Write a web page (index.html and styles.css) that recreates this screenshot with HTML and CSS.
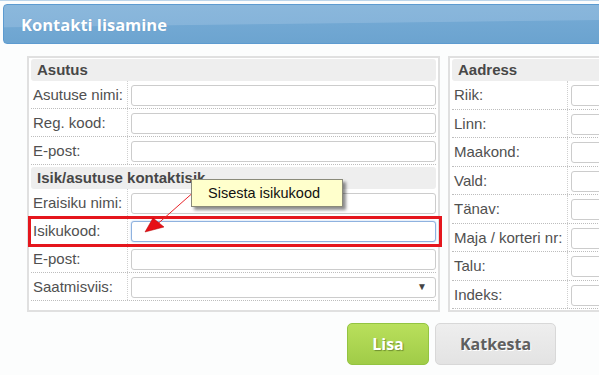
FILE: index.html
```html
<!DOCTYPE html>
<html lang="et">
<head>
  <meta charset="UTF-8" />
  <title>Kontakti lisamine</title>
  <link rel="stylesheet" href="styles.css">
</head>
<body>
  <div class="topline"></div>

  <!-- Pealkiri -->
  <div class="titlebar">
    <h1>Kontakti lisamine</h1>
  </div>

  <div class="forms">
    <div class="panel panel-left">
      <div class="section">Asutus</div>
      <div class="row"><label>Asutuse nimi:</label><div class="cell"><input type="text" /></div></div>
      <div class="row"><label>Reg. kood:</label><div class="cell"><input type="text" /></div></div>
      <div class="row"><label>E-post:</label><div class="cell"><input type="text" /></div></div>

      <div class="section section-gap">Isik/asutuse kontaktisik</div>
      <div class="row"><label>Eraisiku nimi:</label><div class="cell"><input type="text" /></div></div>
      <div class="row"><label>Isikukood:</label><div class="cell"><input class="focused" type="text" /></div></div>
      <div class="row"><label>E-post:</label><div class="cell"><input type="text" /></div></div>
      <div class="row">
        <label>Saatmisviis:</label>
        <div class="cell">
          <div class="select"><span class="caret">▼</span></div>
        </div>
      </div>
    </div>

    <div class="panel panel-right">
      <div class="section">Aadress</div>
      <div class="row"><label>Riik:</label><div class="cell"><input type="text" /></div></div>
      <div class="row"><label>Linn:</label><div class="cell"><input type="text" /></div></div>
      <div class="row"><label>Maakond:</label><div class="cell"><input type="text" /></div></div>
      <div class="row"><label>Vald:</label><div class="cell"><input type="text" /></div></div>
      <div class="row"><label>Tänav:</label><div class="cell"><input type="text" /></div></div>
      <div class="row"><label>Maja / korteri nr:</label><div class="cell"><input type="text" /></div></div>
      <div class="row"><label>Talu:</label><div class="cell"><input type="text" /></div></div>
      <div class="row"><label>Indeks:</label><div class="cell"><input type="text" /></div></div>
    </div>
  </div>

  <div class="actions">
    <button class="btn btn-add">Lisa</button>
    <button class="btn btn-cancel">Katkesta</button>
  </div>

  <!-- Juhend: esiletõst, vihje ja nool -->
  <div class="highlight"></div>
  <svg class="pointer" width="70" height="60" viewBox="0 0 70 60">
    <line x1="55" y1="12" x2="12" y2="50" stroke="#e8262b" stroke-width="1" />
    <polygon points="4,54 12,40 23,49" fill="#e60f16" stroke="#b40000" stroke-width="0.5" />
  </svg>
  <div class="tip">Sisesta isikukood</div>
</body>
</html>
```

FILE: styles.css
```css
body {
  margin: 0;
  background: #fcfdfd;
  font-family: 'Liberation Sans', Arial, sans-serif;
  font-size: 15px;
  color: #505050;
  overflow: hidden;
  width: 599px;
  height: 375px;
  position: relative;
}
.topline {
  height: 1px;
  background: #bcd5ea;
}
.titlebar {
  margin: 3px -20px 0 3px;
  height: 38px;
  border: 1px solid #5d9bd0;
  border-radius: 4px;
  background: linear-gradient(179.3deg, #8bb8dc 0, #86b4da 48%, #72a8d3 50%, #6ba3cf 100%);
  display: flex;
  align-items: center;
}
.titlebar h1 {
  margin: 0 0 0 17px;
  font-family: 'Open Sans', sans-serif;
  font-size: 16.5px;
  font-weight: 700;
  color: #fff;
  text-shadow: 0 0 1px rgba(60,110,160,0.4);
}
.forms {
  display: flex;
  gap: 8px;
  margin-top: 12px;
  padding-left: 27px;
}
.panel {
  box-sizing: border-box;
  border: 2px solid #e0e0e0;
  padding: 1px 2px 1px;
  background: #fff;
  flex-shrink: 0;
}
.panel-left {
  width: 413px;
}
.panel-right {
  width: 260px;
}
.section {
  height: 22px;
  line-height: 22px;
  background: #eeeeee;
  border-radius: 3px;
  padding-left: 6px;
  font-weight: bold;
  color: #474747;
}
.section-gap {
  margin-top: 2px;
}
.row {
  display: flex;
  height: 28px;
  box-sizing: border-box;
  border-bottom: 1px dotted #bdbdbd;
}
.row label {
  width: 97px;
  flex-shrink: 0;
  padding-left: 2px;
  box-sizing: border-box;
  border-right: 1px dotted #cfcfcf;
  display: flex;
  align-items: center;
  white-space: nowrap;
}
.panel-right .row {
  height: 28.5px;
}
.panel-right .row label {
  width: 116px;
}
.cell {
  flex: 1;
  padding: 4px 0 0 3px;
}
.cell input,
.select {
  display: block;
  box-sizing: border-box;
  width: 100%;
  height: 21px;
  margin: 0;
  border: 1px solid #cccccc;
  border-radius: 3px;
  background: #fff;
}
.cell input.focused {
  border-color: #8fb2df;
  box-shadow: 0 0 2px #a9c6ec;
}
.select {
  position: relative;
}
.select .caret {
  position: absolute;
  right: 8px;
  top: 3px;
  font-size: 10px;
  color: #444;
}
.actions {
  display: flex;
  gap: 6px;
  margin: 11px 0 0 347px;
}
.btn {
  height: 42px;
  border-radius: 5px;
  font-family: 'Open Sans', sans-serif;
  font-size: 16px;
  font-weight: 700;
  padding: 0;
}
.btn-add {
  width: 82px;
  border: 1px solid #93c441;
  background: linear-gradient(#b9e05c, #a0cc48);
  color: #fff;
  text-shadow: 1px 1px 1px #6f8f30;
}
.btn-cancel {
  width: 121px;
  border: 1px solid #d8d8d8;
  background: linear-gradient(#eeeeee, #e3e3e3);
  color: #5f5f5f;
  text-shadow: 1px 1px 0 #fff;
}
.highlight {
  position: absolute;
  left: 28px;
  top: 216px;
  width: 408px;
  height: 25px;
  border: 3px solid #e5161d;
}
.pointer {
  position: absolute;
  left: 141px;
  top: 178px;
}
.tip {
  position: absolute;
  left: 191px;
  top: 179px;
  box-sizing: border-box;
  width: 152px;
  height: 28px;
  padding-left: 16px;
  line-height: 26px;
  background: #ffffcc;
  border: 1px solid #8a8a7a;
  box-shadow: 3px 3px 3px rgba(0,0,0,0.45);
  color: #111;
  font-size: 14.5px;
}
```
